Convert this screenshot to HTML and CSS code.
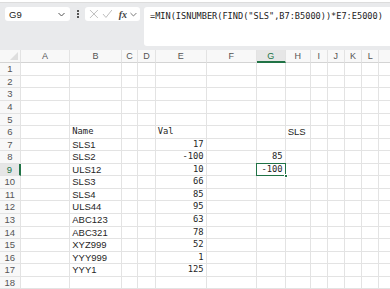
FILE: index.html
```html
<!DOCTYPE html>
<html lang="en">
<head>
  <meta charset="UTF-8" />
  <title>Sheet</title>
  <link rel="stylesheet" href="styles.css">
</head>
<body>
  <div class="ribbon-edge"></div>

  <div class="toolbar">
    <div class="namebox">
      <span>G9</span>
      <svg class="chev" width="7" height="5" viewBox="0 0 7 5"><path d="M0.5 1 L3.5 4 L6.5 1" fill="none" stroke="#555" stroke-width="1"/></svg>
    </div>
    <div class="dots"><i></i><i></i><i></i></div>
    <div class="fxbox">
      <svg width="10" height="10" viewBox="0 0 10 10"><path d="M1 1 L9 9 M9 1 L1 9" stroke="#bdbdbd" stroke-width="1" fill="none"/></svg>
      <svg width="11" height="10" viewBox="0 0 11 10"><path d="M1 5 L4 8.5 L10 1" stroke="#bdbdbd" stroke-width="1" fill="none"/></svg>
      <span class="fx">fx</span>
      <svg class="chev" width="7" height="5" viewBox="0 0 7 5"><path d="M0.5 1 L3.5 4 L6.5 1" fill="none" stroke="#777" stroke-width="1"/></svg>
    </div>
    <div class="formula">=MIN(ISNUMBER(FIND("SLS",B7:B5000))*E7:E5000)</div>
  </div>

  <div class="sheet" id="sheet"></div>

  <script>
    const cols = ["A","B","C","D","E","F","G","H","I","J","K","L","M"];
    const names = ["SLS1","SLS2","ULS12","SLS3","SLS4","ULS44","ABC123","ABC321","XYZ999","YYY999","YYY1"];
    const vals = [17,-100,10,66,85,95,63,78,52,1,125];

    const sheet = document.getElementById("sheet");

    function cell(cls, text) {
      const d = document.createElement("div");
      d.className = "cell " + cls;
      if (text !== undefined) d.textContent = text;
      sheet.appendChild(d);
      return d;
    }

    cell("corner");
    cols.forEach(c => cell("colhead" + (c === "G" ? " active" : ""), c));

    for (let r = 1; r <= 18; r++) {
      cell("rowhead" + (r === 9 ? " active" : ""), r);
      cols.forEach(c => {
        let text = "", cls = "";
        if (r === 6 && c === "B") { text = "Name"; cls = "mono"; }
        if (r === 6 && c === "E") { text = "Val"; cls = "mono"; }
        if (r === 6 && c === "H") { text = "SLS"; cls = "label"; }
        if (r >= 7 && r <= 17 && c === "B") { text = names[r - 7]; cls = "name"; }
        if (r >= 7 && r <= 17 && c === "E") { text = vals[r - 7]; cls = "num"; }
        if (r === 8 && c === "G") { text = "85"; cls = "num"; }
        if (r === 9 && c === "G") { text = "-100"; cls = "num selected"; }
        cell(cls, text);
      });
    }
  </script>
</body>
</html>
```

FILE: styles.css
```css
body {
  margin: 0;
  width: 390px;
  height: 289px;
  overflow: hidden;
  background-color: #e9eaec;
  font-family: 'Liberation Sans', Arial, sans-serif;
  color: #1f1f1f;
}

.ribbon-edge {
  height: 2px;
  background-color: #fff;
  border-bottom: 1px solid #dcdcdc;
}

.toolbar {
  display: flex;
  align-items: flex-start;
  padding: 4px 0 0 5px;
  height: 43px;
  overflow: hidden;
}

.namebox {
  width: 65px;
  height: 14px;
  background-color: #fff;
  border-radius: 3px;
  display: flex;
  align-items: center;
  justify-content: space-between;
  padding: 0 5px 0 4px;
  box-sizing: border-box;
  font-size: 9.5px;
  color: #222;
}

.dots {
  width: 15px;
  height: 14px;
  display: flex;
  flex-direction: column;
  align-items: center;
  justify-content: center;
  gap: 1px;
}

.dots i {
  display: block;
  width: 2px;
  height: 2px;
  background-color: #555;
}

.fxbox {
  width: 55px;
  height: 14px;
  background-color: #fff;
  border-radius: 3px;
  display: flex;
  align-items: center;
  gap: 3px;
  padding: 0 3px 0 4px;
  box-sizing: border-box;
}

.fx {
  font-family: 'Liberation Serif', serif;
  font-style: italic;
  font-weight: bold;
  font-size: 10px;
  color: #444;
  margin-left: 3px;
}

.formula {
  margin-left: 4px;
  flex: 1;
  height: 39px;
  background-color: #fff;
  border-radius: 3px 0 0 3px;
  padding: 4px 0 0 6px;
  box-sizing: border-box;
  font-family: 'DejaVu Sans Mono', monospace;
  font-size: 8.6px;
  white-space: nowrap;
  color: #222;
}

.sheet {
  display: grid;
  grid-template-columns: 20.7px 49.6px 51.4px 16.6px 17.4px 51px 50px 29px 25px 17px 17.3px 17.3px 17px 40px;
  grid-template-rows: 13.3px;
  grid-auto-rows: 12.57px;
  background-color: #fff;
}

.cell {
  border-right: 1px solid #e3e3e3;
  border-bottom: 1px solid #e3e3e3;
  box-sizing: border-box;
  font-size: 9px;
  line-height: 11.5px;
  padding: 0 2px;
  white-space: nowrap;
  overflow: visible;
  position: relative;
}

.corner, .colhead, .rowhead {
  background-color: #f8f8f8;
  color: #555;
  text-align: center;
}

.rowhead {
  font-size: 9.5px;
}

.corner {
  border-bottom-color: #d4d4d4;
}

.corner::after {
  content: "";
  position: absolute;
  right: 2px;
  bottom: 2px;
  border-left: 8px solid transparent;
  border-bottom: 8px solid #dedede;
}

.colhead {
  border-bottom-color: #d4d4d4;
  line-height: 12.5px;
}

.colhead.active {
  background-color: #e6e6e6;
  color: #217346;
  border-bottom: 2px solid #217346;
}

.rowhead.active {
  background-color: #e6e6e6;
  color: #217346;
  border-right: 2px solid #217346;
}

.mono, .num {
  font-family: 'DejaVu Sans Mono', monospace;
  font-size: 8.8px;
}

.num {
  text-align: right;
}

.name {
  padding-left: 2px;
  font-size: 9.5px;
}

.label {
  font-size: 9.5px;
}

.selected::after {
  content: "";
  position: absolute;
  left: -1px;
  top: -1px;
  right: -1px;
  bottom: -1px;
  border: 1.5px solid #217346;
}

.selected::before {
  content: "";
  position: absolute;
  right: -3px;
  bottom: -3px;
  width: 4px;
  height: 4px;
  background-color: #217346;
  border: 1px solid #fff;
  box-sizing: border-box;
  z-index: 1;
}
```
